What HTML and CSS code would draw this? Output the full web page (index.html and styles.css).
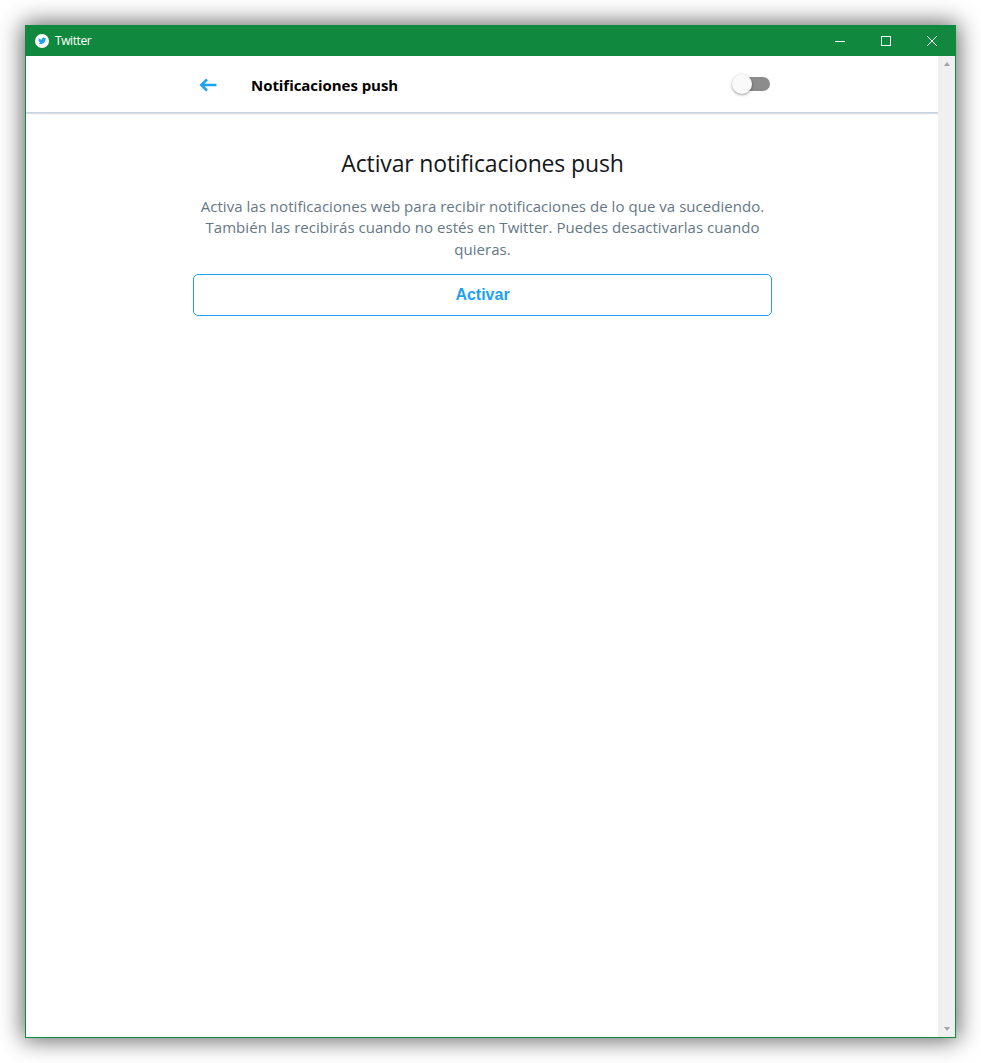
FILE: index.html
```html
<!DOCTYPE html>
<html lang="es">
<head>
<meta charset="utf-8">
<title>Twitter</title>
<link rel="stylesheet" href="styles.css">
</head>
<body>
<div class="window">
  <header class="titlebar">
    <div class="app">
      <svg class="app-icon" width="14" height="14" viewBox="0 0 14 14"><circle cx="7" cy="7" r="7" fill="#fff"/><path fill="#1da1f2" d="M11 4.300c-.3.100-.6.200-.9.300.3-.2.600-.5.700-.9-.3.200-.7.300-1 .4-.3-.3-.7-.5-1.200-.5-.9 0-1.600.7-1.600 1.600 0 .1 0 .2 0 .4C5.700 5.500 4.500 4.900 3.700 3.900c-.1.200-.2.500-.2.800 0 .6.300 1.100.7 1.400-.3 0-.5-.1-.7-.2 0 .8.600 1.400 1.300 1.600-.2.100-.5.100-.7 0 .2.600.8 1.100 1.500 1.100-.6.500-1.300.7-2.100.6.700.5 1.500.7 2.400.7 2.900 0 4.500-2.400 4.500-4.500v-.2c.3-.2.600-.5.800-.8z"/></svg>
      <span class="app-name">Twitter</span>
    </div>
    <div class="controls">
      <span class="control"><svg width="10" height="10" viewBox="0 0 10 10"><path d="M0 5.500h10" stroke="#fff" fill="none"/></svg></span>
      <span class="control"><svg width="10" height="10" viewBox="0 0 10 10"><rect x=".5" y=".5" width="9" height="9" stroke="#fff" fill="none"/></svg></span>
      <span class="control"><svg width="10" height="10" viewBox="0 0 10 10"><path d="M0 0l10 10M10 0L0 10" stroke="#fff" fill="none"/></svg></span>
    </div>
  </header>
  <div class="viewport">
    <main class="page">
      <div class="topbar">
        <div class="topbar-inner">
          <svg class="back" width="18" height="14" viewBox="0 0 18 14"><path d="M17.500 7H2.500M8 1.300 2.300 7 8 12.700" stroke="#1da1f2" stroke-width="2.600" fill="none"/></svg>
          <h1 class="heading">Notificaciones push</h1>
          <span class="switch"><span class="knob"></span></span>
        </div>
      </div>
      <section class="content">
        <h2 class="title">Activar notificaciones push</h2>
        <p class="text">Activa las notificaciones web para recibir notificaciones de lo que va sucediendo. También las recibirás cuando no estés en Twitter. Puedes desactivarlas cuando quieras.</p>
        <button class="activate">Activar</button>
      </section>
    </main>
    <div class="scrollbar">
      <span class="arrow-up"></span>
      <span class="arrow-down"></span>
    </div>
  </div>
</div>
</body>
</html>
```
FILE: styles.css
```css
* { box-sizing: border-box; }
html, body { margin: 0; height: 100%; background: #fff; overflow: hidden; }
body { padding: 25px; font-family: "Open Sans", "Noto Sans", sans-serif; }
.window {
  width: 931px;
  height: 1013px;
  display: flex;
  flex-direction: column;
  background: #fff;
  border: 1px solid #10893e;
  border-top: 0;
  box-shadow: 0 0 22px 2px rgba(0,0,0,.62);
}
.titlebar {
  height: 31px;
  margin: 0 -1px;
  background: #10893e;
  color: #fff;
  display: flex;
  align-items: center;
  justify-content: space-between;
  flex: none;
}
.app { display: flex; align-items: center; padding-left: 10px; gap: 6px; }
.app-icon { display: block; }
.app-name { font-size: 12px; letter-spacing: -.4px; }
.controls { display: flex; padding-right: 1px; }
.control { width: 46px; height: 31px; display: flex; align-items: center; justify-content: center; }
.control svg { display: block; }
.viewport { flex: 1; display: flex; min-height: 0; }
.page { flex: 1; min-width: 0; display: flex; flex-direction: column; }
.topbar { height: 57px; border-bottom: 1px solid #c5d3e0; box-shadow: 0 1px 1px rgba(160,170,185,.4); flex: none; }
.topbar-inner { width: 579px; margin-left: 167px; height: 56px; display: flex; align-items: center; padding-top: 2px; }
.back { margin-left: 6px; flex: none; }
.heading { margin: 0 0 0 34px; font-size: 15px; font-weight: 700; color: #000; letter-spacing: -.05px; flex: 1; }
.switch { position: relative; width: 33px; height: 14px; border-radius: 0 7px 7px 0; background: #8c8c8c; margin-right: 2px; margin-top: -2px; }
.knob { position: absolute; left: -5px; top: -3px; width: 20px; height: 20px; border-radius: 50%; background: #fafafa; box-shadow: 0 1px 3px rgba(0,0,0,.4); }
.content { width: 579px; margin-left: 167px; display: flex; flex-direction: column; align-items: center; }
.title { margin: 34px 0 0; font-size: 23px; font-weight: 400; line-height: 32px; color: #14171a; letter-spacing: -.15px; }
.text { margin: 17px 0 0; font-size: 15px; line-height: 21.300px; color: #657786; text-align: center; letter-spacing: .04px; }
.activate {
  margin-top: 14px;
  width: 100%;
  height: 42px;
  background: #fff;
  border: 1px solid #1da1f2;
  border-radius: 5px;
  color: #1da1f2;
  font: 700 16px "Liberation Sans", Arial, sans-serif;
}
.scrollbar { width: 17px; background: #f0f0f0; flex: none; display: flex; flex-direction: column; justify-content: space-between; align-items: center; padding: 6px 0; }
.arrow-up { width: 0; height: 0; border: 3.500px solid transparent; border-top: 0; border-bottom: 4px solid #a3a3a3; }
.arrow-down { width: 0; height: 0; border: 3.500px solid transparent; border-bottom: 0; border-top: 4px solid #a3a3a3; }
```
